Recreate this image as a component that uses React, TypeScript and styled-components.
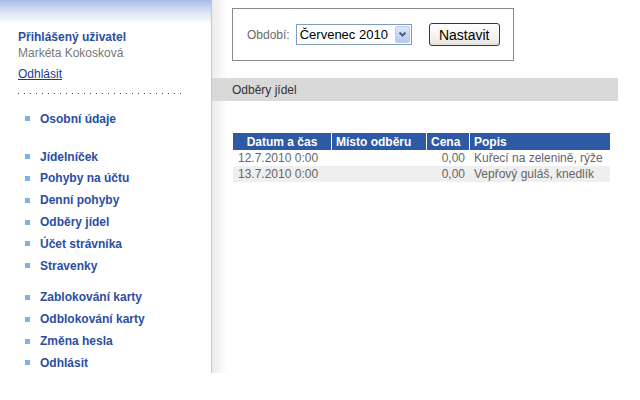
import * as React from "react";
import styled, { createGlobalStyle } from "styled-components";

const GlobalStyle = createGlobalStyle`
  body {
    margin: 0;
    background: #ffffff;
    font-family: "Liberation Sans", Arial, sans-serif;
  }
`;

const Page = styled.div`
  display: flex;
  width: 640px;
  height: 373px;
`;

const Sidebar = styled.nav`
  box-sizing: border-box;
  width: 212px;
  flex-shrink: 0;
  padding: 30px 0 0 18px;
  border-right: 1px solid #c8c8c8;
  background: linear-gradient(#a9bce8 0, #dbe3f6 12px, #ffffff 24px);
`;

const UserTitle = styled.div`
  font-size: 12px;
  font-weight: bold;
  color: #2b4ea2;
  line-height: 15px;
`;

const UserName = styled.div`
  font-size: 12px;
  color: #777777;
  line-height: 15px;
  margin-top: 1px;
`;

const LogoutLink = styled.a`
  display: inline-block;
  margin-top: 6px;
  font-size: 12px;
  line-height: 15px;
  color: #1c3b8e;
  text-decoration: underline;
`;

const DottedRule = styled.div`
  width: 168px;
  height: 1px;
  margin-top: 11px;
  background: repeating-linear-gradient(to right, #4a5068 0 1px, transparent 1px 6px);
`;

const MenuGroup = styled.ul<{ gap: number }>`
  list-style: none;
  margin: ${({ gap }) => gap}px 0 0 0;
  padding: 0 0 0 7px;
`;

const MenuItem = styled.li`
  display: flex;
  align-items: center;
  height: 21.8px;
  font-size: 12px;
  font-weight: bold;
  color: #2b4ea2;

  &::before {
    content: "";
    width: 5px;
    height: 5px;
    margin-right: 10px;
    background: #7eb0ea;
  }
`;

const Main = styled.main`
  flex: 1;
  display: flex;
  flex-direction: column;
  background: linear-gradient(to right, #ececec 0, #ffffff 16px);
`;

const FilterBox = styled.form`
  box-sizing: border-box;
  display: flex;
  align-items: center;
  width: 282px;
  height: 53px;
  margin: 8px 0 0 20px;
  padding: 0 0 0 14px;
  border: 1px solid #8a8a8a;
  background: #ffffff;
`;

const FilterLabel = styled.label`
  font-size: 12px;
  color: #6a6a6a;
  margin-right: 6px;
`;

const SelectBox = styled.div`
  box-sizing: border-box;
  display: flex;
  align-items: center;
  width: 116px;
  height: 21px;
  border: 1px solid #7f9db9;
  background: #ffffff;
`;

const SelectValue = styled.span`
  flex: 1;
  padding-left: 3px;
  font-size: 13px;
  color: #000000;
  white-space: nowrap;
`;

const SelectArrow = styled.span`
  display: flex;
  align-items: center;
  justify-content: center;
  width: 15px;
  height: 17px;
  margin-right: 1px;
  border-radius: 2px;
  background: linear-gradient(#dde7fb, #b4c9f5);
  border: 1px solid #b9cbef;
  box-sizing: border-box;
`;

const SetButton = styled.button`
  box-sizing: border-box;
  width: 71px;
  height: 23px;
  margin-left: 17px;
  padding: 0;
  font-family: "Liberation Sans", Arial, sans-serif;
  font-size: 14px;
  color: #000000;
  border: 1px solid #1f3c6a;
  border-radius: 3px;
  background: linear-gradient(#fefefd, #f2f1ec 70%, #e4e2d9);
`;

const SectionBar = styled.h2`
  box-sizing: border-box;
  width: 406px;
  height: 23px;
  margin: 17px 0 0 0;
  padding: 0 0 0 20px;
  display: flex;
  align-items: center;
  font-size: 12px;
  font-weight: normal;
  color: #333333;
  background: #d9d9d9;
`;

const Table = styled.table`
  width: 377px;
  margin: 32px 0 0 21px;
  border-collapse: separate;
  border-spacing: 0;
  font-size: 12px;
`;

const HeadCell = styled.th<{ w: number; center?: boolean }>`
  width: ${({ w }) => w}px;
  height: 17px;
  padding: 0 4px;
  text-align: ${({ center }) => (center ? "center" : "left")};
  font-weight: bold;
  color: #ffffff;
  background: #2e59a4;
  border-left: 1px solid #ffffff;

  &:first-child {
    border-left: none;
  }
`;

const Row = styled.tr<{ striped: boolean }>`
  background: ${({ striped }) => (striped ? "#efefef" : "#ffffff")};
`;

const Cell = styled.td<{ right?: boolean }>`
  height: 16px;
  padding: 0 4px 0 5px;
  color: #666666;
  text-align: ${({ right }) => (right ? "right" : "left")};
  white-space: nowrap;
`;

const rows = [
  { date: "12.7.2010 0:00", place: "", price: "0,00", desc: "Kuřecí na zelenině, rýže" },
  { date: "13.7.2010 0:00", place: "", price: "0,00", desc: "Vepřový guláš, knedlík" }
];

const menuGroups = [
  { gap: 14, items: ["Osobní údaje"] },
  { gap: 16, items: ["Jídelníček", "Pohyby na účtu", "Denní pohyby", "Odběry jídel", "Účet strávníka", "Stravenky"] },
  { gap: 10, items: ["Zablokování karty", "Odblokování karty", "Změna hesla", "Odhlásit"] }
];

export default function App() {
  return (
    <React.Fragment>
      <GlobalStyle />
      <Page>
        <Sidebar>
          <UserTitle>Přihlášený uživatel</UserTitle>
          <UserName>Markéta Kokosková</UserName>
          <LogoutLink href="#">Odhlásit</LogoutLink>
          <DottedRule />
          {menuGroups.map((g, i) => (
            <MenuGroup key={i} gap={g.gap}>
              {g.items.map((item) => (
                <MenuItem key={item}>{item}</MenuItem>
              ))}
            </MenuGroup>
          ))}
        </Sidebar>
        <Main>
          <FilterBox onSubmit={(e) => e.preventDefault()}>
            <FilterLabel>Období:</FilterLabel>
            <SelectBox>
              <SelectValue>Červenec 2010</SelectValue>
              <SelectArrow>
                <svg width="9" height="7" viewBox="0 0 9 7">
                  <path d="M1.5 1.5 L4.5 4.5 L7.5 1.5" fill="none" stroke="#4d6185" strokeWidth="2" />
                </svg>
              </SelectArrow>
            </SelectBox>
            <SetButton type="submit">Nastavit</SetButton>
          </FilterBox>
          <SectionBar>Odběry jídel</SectionBar>
          <Table>
            <thead>
              <tr>
                <HeadCell w={90} center>Datum a čas</HeadCell>
                <HeadCell w={86}>Místo odběru</HeadCell>
                <HeadCell w={34}>Cena</HeadCell>
                <HeadCell w={132}>Popis</HeadCell>
              </tr>
            </thead>
            <tbody>
              {rows.map((r, i) => (
                <Row key={r.date} striped={i % 2 === 1}>
                  <Cell>{r.date}</Cell>
                  <Cell>{r.place}</Cell>
                  <Cell right>{r.price}</Cell>
                  <Cell>{r.desc}</Cell>
                </Row>
              ))}
            </tbody>
          </Table>
        </Main>
      </Page>
    </React.Fragment>
  );
}
